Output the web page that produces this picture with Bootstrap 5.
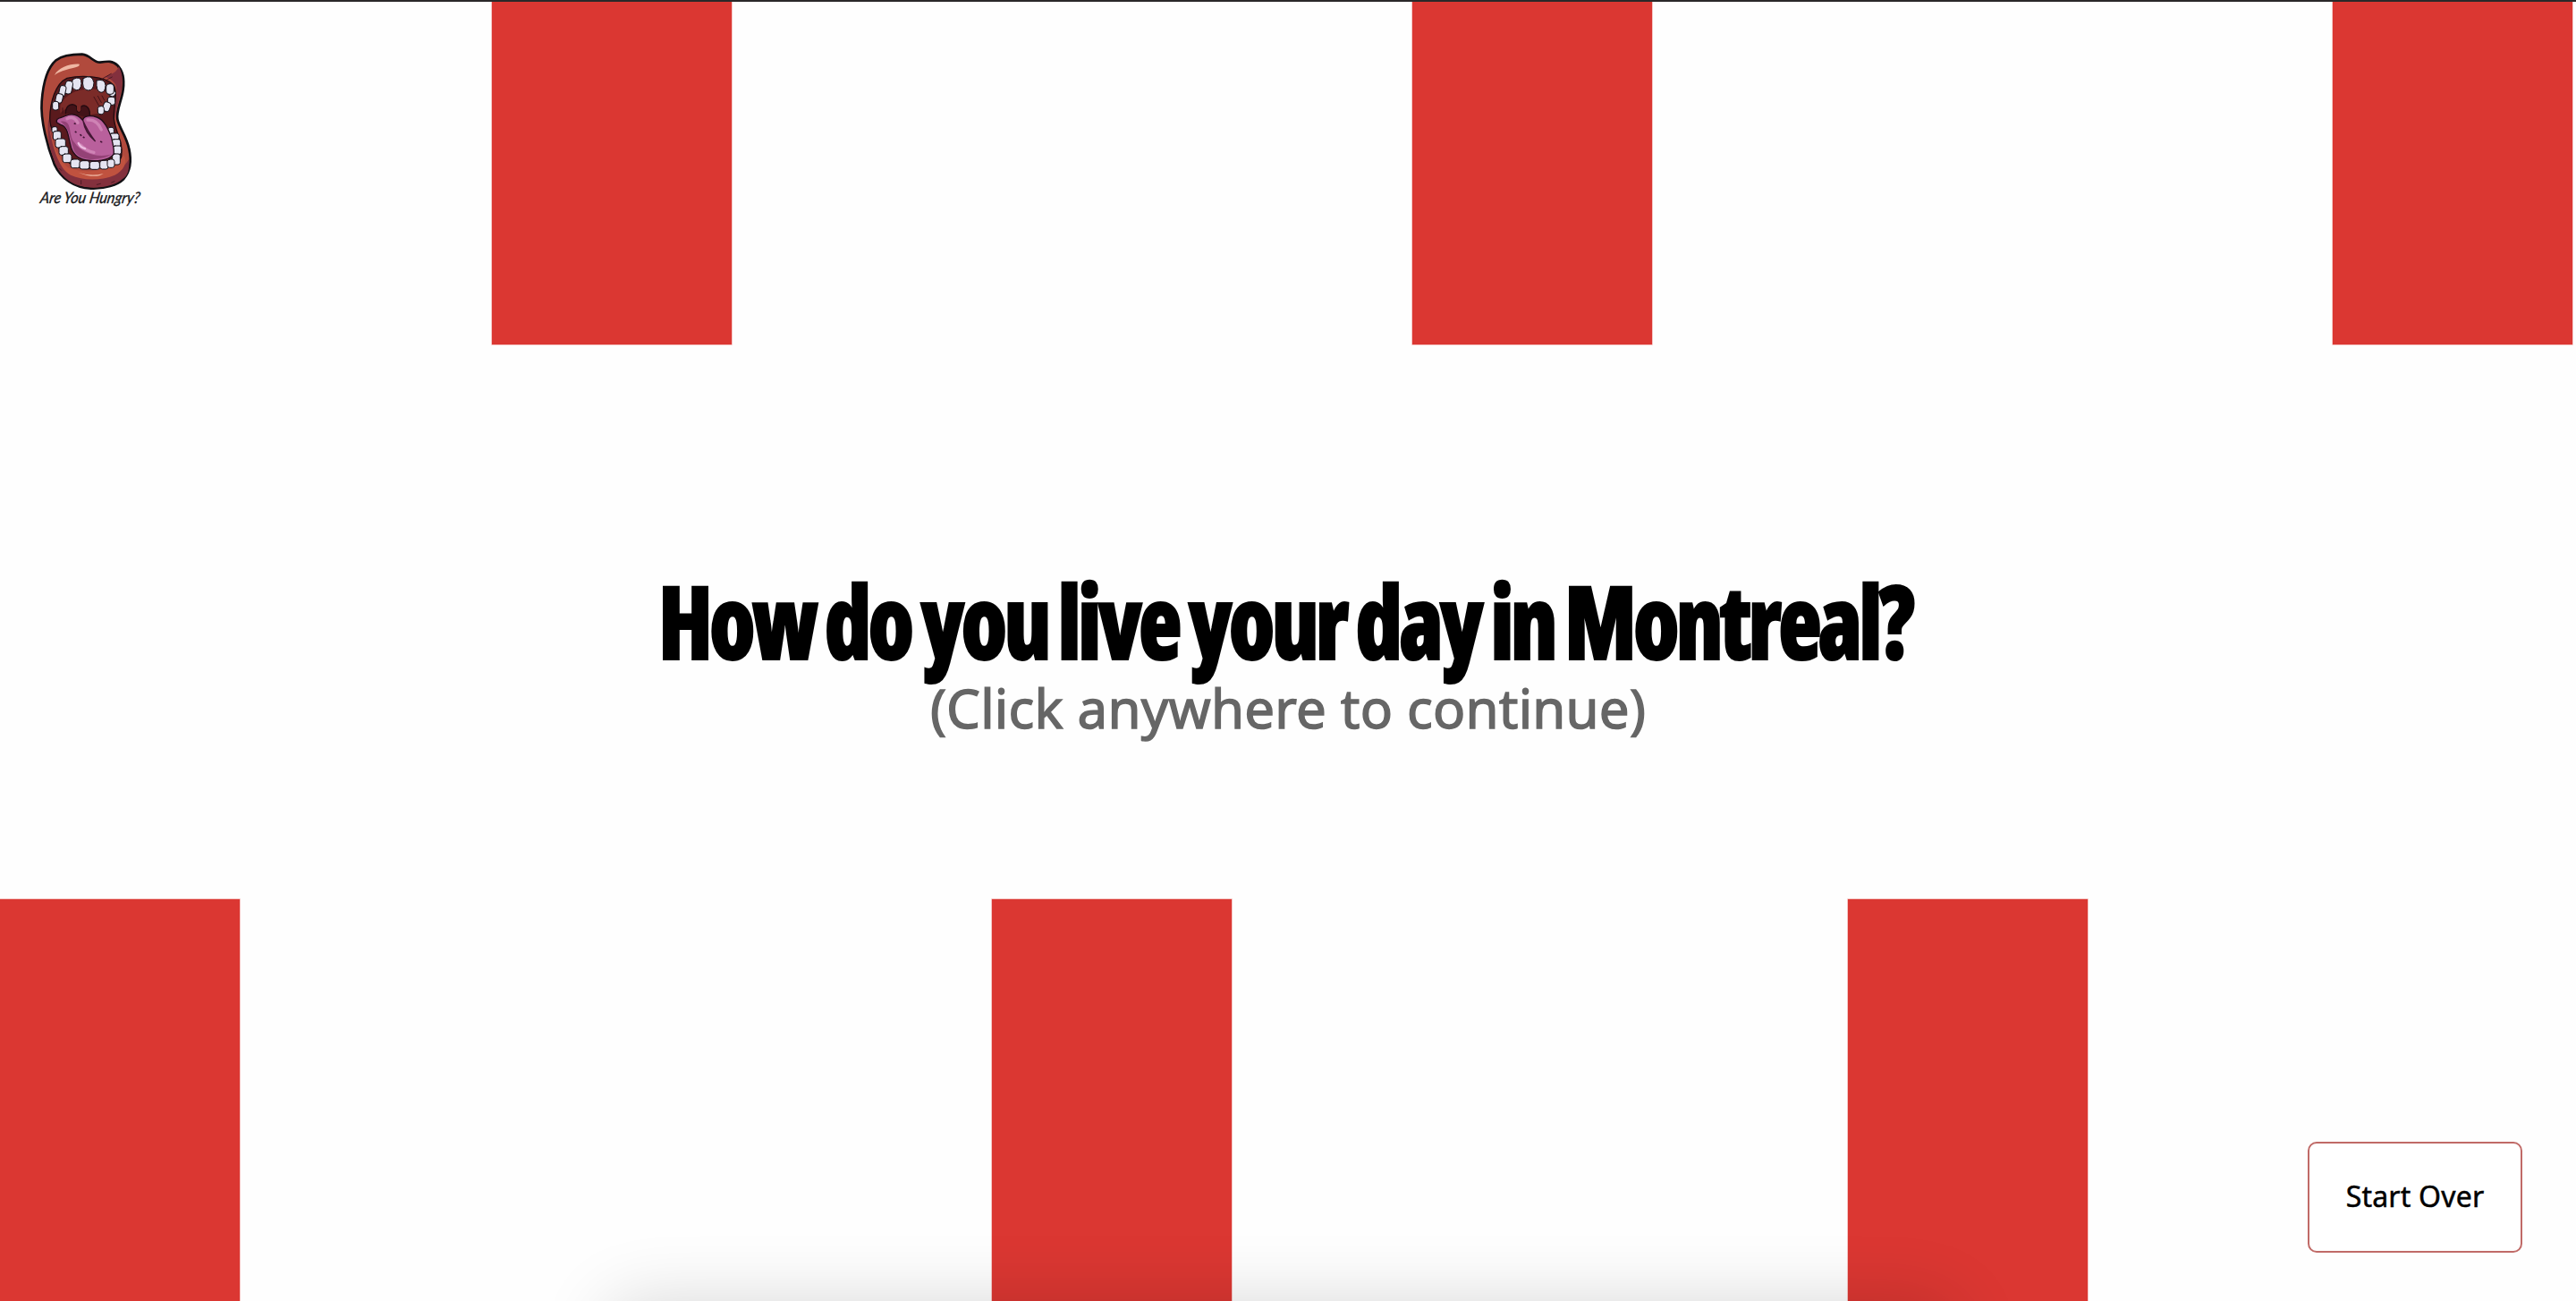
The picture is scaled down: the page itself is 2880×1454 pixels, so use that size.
<!DOCTYPE html>
<html lang="en">
<head>
<meta charset="utf-8">
<meta name="viewport" content="width=device-width, initial-scale=1">
<title>Are You Hungry?</title>
<link href="https://cdn.jsdelivr.net/npm/bootstrap@5.3.0/dist/css/bootstrap.min.css" rel="stylesheet">
<style>
body{background:#fefefe;color:#000;font-family:"Noto Sans",sans-serif}
.screen{height:1454px;border-top:2px solid #2a2829}
.stripe{width:268px;flex:none;background:#db3732;box-shadow:0 0 0 .6px #f0a5a2}
.stripes-top{height:383px;padding-left:550px;gap:761px}
.stripes-low{height:449px}
.stripes-low .stripe:nth-child(2){margin-left:841px}
.stripes-low .stripe:nth-child(3){margin-left:689px}
.brand{left:30px;top:43px}
.prompt{padding-top:248px}
.title-xl{font:800 113px/120px "Open Sans",sans-serif;font-stretch:75%;letter-spacing:-4.4px;word-spacing:-3px;white-space:nowrap;margin:0;-webkit-text-stroke:2px #000;transform:translateX(-3.5px) scaleX(.887)}
.hint{font:400 60px/76px "Noto Sans",sans-serif;letter-spacing:.2px;color:#666;margin:0;-webkit-text-stroke:1.4px #666}
.btn-over{right:60px;bottom:54px;width:240px;height:124px;border:2px solid #c06a67;border-radius:10px;background:#fff;color:#000;font-size:32px;letter-spacing:.2px;padding-bottom:8px;-webkit-text-stroke:.5px #000}
.dock-shade{left:680px;width:1505px;height:100px;bottom:-102px;border-radius:30px;box-shadow:0 0 80px rgba(0,0,0,.16)}
</style>
<script src="https://cdn.jsdelivr.net/npm/bootstrap@5.3.0/dist/js/bootstrap.bundle.min.js"></script>
</head>
<body>
<main class="screen position-relative overflow-hidden d-flex flex-column">
  <div class="stripes-top d-flex flex-shrink-0"><div class="stripe"></div><div class="stripe"></div><div class="stripe"></div></div>
  <section class="prompt flex-grow-1 text-center">
    <h1 class="title-xl">How do you live your day in Montreal?</h1>
    <p class="hint">(Click anywhere to continue)</p>
  </section>
  <div class="stripes-low d-flex flex-shrink-0"><div class="stripe"></div><div class="stripe"></div><div class="stripe"></div></div>
  <div class="dock-shade position-absolute"></div>
  <a class="brand position-absolute" href="#" aria-label="Are You Hungry?">
    <svg class="d-block" width="140" height="200" viewBox="0 0 420 600" stroke-linejoin="round" stroke-linecap="round">
      <!-- lips -->
      <path d="M185 47C215 50 222 75 246 74C272 70 288 68 304 84C324 104 327 135 323 165C319 200 298 240 304 265C308 290 336 325 343 365C352 405 346 440 325 465C305 485 260 499 215 497C160 495 115 465 92 415C70 360 45 270 50 205C54 150 66 95 98 67C120 50 155 47 185 47Z" fill="#b14a3d" stroke="#121014" stroke-width="8"/>
      <path d="M262 122C285 116 304 104 308 88C322 108 322 140 317 165C310 205 294 240 300 268C285 240 310 190 298 150C290 134 278 128 262 122Z" fill="#83303d"/>
      <path d="M73 262C88 340 105 430 170 458C225 470 310 455 342 400C346 435 338 455 320 466C290 492 240 496 205 493C145 487 113 455 95 412C77 365 65 320 73 262Z" fill="#83303d"/>
      <path d="M74 285C90 350 108 410 145 430C200 447 280 445 325 385C340 410 324 438 295 452C245 473 185 470 147 452C105 430 84 350 74 285Z" fill="#c0523f"/>
      <path d="M93 117C105 92 145 78 176 80C182 94 125 92 93 117Z" fill="#efb7a3"/>
      <path d="M172 443Q215 458 257 447Q230 466 172 443Z" fill="#efb7a3"/>
      <path d="M255 128L283 112M266 134L286 123M182 470v12M235 484l12-3M284 477l10-4M110 430l6 6" fill="none" stroke="#4c1a24" stroke-width="3"/>
      <!-- mouth cavity -->
      <path d="M77 262C78 210 95 145 135 127C180 117 260 118 291 150C307 175 290 230 292 262C295 305 325 340 317 390C310 425 240 433 190 430C150 425 118 400 103 350C95 315 77 300 77 262Z" fill="#5a1a1d" stroke="#210b10" stroke-width="4"/>
      <path d="M112 218C130 180 170 164 205 164C245 160 285 180 288 195L243 245L210 250C210 220 150 205 112 245Z" fill="#7b2b28"/>
      <path d="M130 245C130 215 155 209 167 222C167 246 180 248 182 222C200 212 215 230 210 258" fill="#431318" stroke="#240b10" stroke-width="4"/>
      <path d="M168 215v19q8 12 13 0v-19z" fill="#7b2b28"/>
      <path d="M225 190l16 28M238 187l12 22M252 186l8 15M120 227v18" stroke="#431318" stroke-width="3"/>
      <!-- upper teeth -->
      <g fill="#e5e4f1" stroke="#17131b" stroke-width="3">
        <rect x="270" y="165" width="28" height="21" rx="9" transform="rotate(35 284 175)"/>
        <rect x="271" y="190" width="25" height="27" rx="8"/>
        <rect x="256" y="207" width="24" height="31" rx="9" transform="rotate(20 267 222)"/>
        <rect x="238" y="221" width="21" height="27" rx="8"/>
        <rect x="266" y="146" width="26" height="35" rx="10"/>
        <path d="M234 135q28-8 30 16q-1 24-15 24q-18-2-15-40Z"/>
        <path d="M189 128q30-17 36 14q-1 26-19 26q-24-2-17-40Z"/>
        <path d="M154 131q30-15 29 14q-2 23-17 22q-22-4-12-36Z"/>
        <rect x="127" y="136" width="25" height="44" rx="11" transform="rotate(11 139 160)"/>
        <rect x="109" y="152" width="21" height="37" rx="9" transform="rotate(12 120 170)"/>
        <rect x="97" y="179" width="23" height="31" rx="9" transform="rotate(12 108 195)"/>
        <rect x="86" y="205" width="21" height="29" rx="8"/>
      </g>
      <!-- lower teeth -->
      <g fill="#e5e4f1" stroke="#17131b" stroke-width="3">
        <rect x="84" y="290" width="18" height="20" rx="6"/><rect x="88" y="305" width="27" height="29" rx="7"/>
        <rect x="96" y="330" width="34" height="30" rx="8"/><rect x="108" y="356" width="31" height="29" rx="8"/>
        <rect x="120" y="381" width="30" height="29" rx="8"/><rect x="272" y="292" width="20" height="23" rx="7"/>
        <rect x="278" y="312" width="31" height="22" rx="7"/><rect x="285" y="332" width="29" height="25" rx="7"/>
        <rect x="289" y="354" width="28" height="28" rx="7"/><rect x="287" y="381" width="26" height="36" rx="7"/>
        <rect x="147" y="399" width="31" height="29" rx="8"/><rect x="177" y="404" width="33" height="28" rx="8"/>
        <rect x="211" y="406" width="33" height="27" rx="8"/><rect x="245" y="403" width="28" height="29" rx="8"/>
        <rect x="270" y="399" width="24" height="28" rx="8"/>
      </g>
      <!-- tongue -->
      <path d="M101 276C94 259 118 262 130 253C155 243 174 251 188 269C188 252 215 251 235 258C260 266 274 301 284 326C287 346 295 366 291 382C275 405 229 407 199 402C167 396 151 378 146 349C139 324 138 288 113 283Z" fill="#b9609c" stroke="#210d18" stroke-width="4"/>
      <path d="M113 272C155 265 137 315 159 342C184 380 240 396 285 382C250 405 182 407 161 374C145 340 148 297 113 272Z" fill="#944276"/>
      <path d="M189 271Q195 310 229 338Q203 304 189 271" fill="#7c2f62" stroke="#421733" stroke-width="4"/>
      <path d="M135 263Q158 252 171 277M204 267Q236 265 250 300M181 351q18 20 44 25" fill="none" stroke="#cf83b5" stroke-width="10"/>
      <path d="M173 345q7 15 22 18" stroke="#edbce0" stroke-width="7" fill="none"/>
      <path d="M160 279l2 1M163 307l2 1M180 317l2 2M190 325l2 1M248 340l3 1" stroke="#401334" stroke-width="5"/>
      <text x="46" y="546" textLength="334" lengthAdjust="spacingAndGlyphs" font-family="Lato,sans-serif" font-style="italic" font-size="52" fill="#17171a" stroke="#17171a" stroke-width="1" transform="translate(93 0) skewX(-10)">Are You Hungry?</text>
    </svg>
  </a>
  <button type="button" class="btn btn-over position-absolute">Start Over</button>
</main>
</body>
</html>
